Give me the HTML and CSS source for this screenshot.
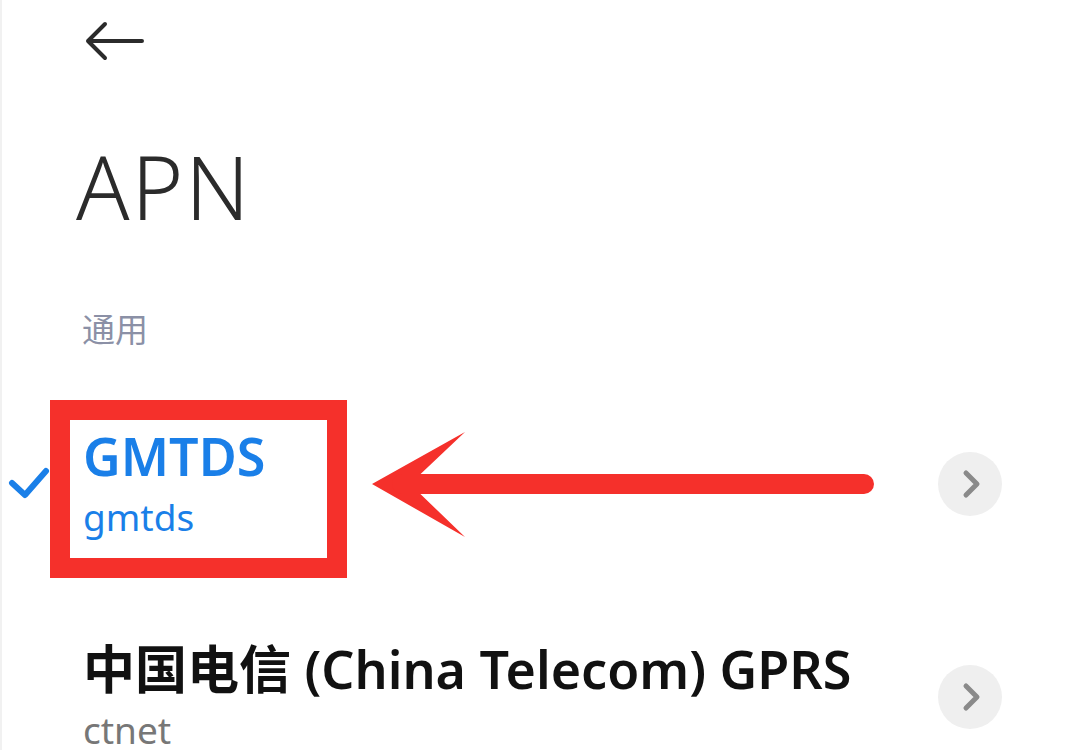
FILE: index.html
```html
<!DOCTYPE html>
<html lang="zh">
  <head>
    <meta charset="UTF-8" />
    <meta name="viewport" content="width=device-width, initial-scale=1.0" />
    <title>APN</title>
    <link rel="stylesheet" href="styles.css">
  </head>
  <body>
    <div class="page">

      <div class="top-bar">
        <svg class="back-icon" width="60" height="44" viewBox="0 0 60 44">
          <path d="M57 20 H3 M20 3 L3 20 L20 37" fill="none" stroke="#2b2b2b" stroke-width="4" stroke-linecap="round" stroke-linejoin="round"/>
        </svg>
      </div>

      <h1 class="page-title">APN</h1>

      <p class="section-label">通用</p>

      <div class="apn-list">

        <div class="apn-row apn-row-active">
          <div class="check-col">
            <svg width="42" height="34" viewBox="0 0 42 34">
              <path d="M4 16 L17 28 L38 4" fill="none" stroke="#1a7fe8" stroke-width="6" stroke-linecap="round" stroke-linejoin="round"/>
            </svg>
          </div>
          <div class="apn-text">
            <p class="apn-name">GMTDS</p>
            <p class="apn-value">gmtds</p>
          </div>
          <div class="more-but">
            <svg width="20" height="30" viewBox="0 0 20 30">
              <path d="M4 4 L15 15 L4 26" fill="none" stroke="#8a8a8a" stroke-width="5" stroke-linecap="round" stroke-linejoin="round"/>
            </svg>
          </div>

          <div class="mark-box"></div>
          <svg class="mark-arrow" width="510" height="110" viewBox="0 0 510 110">
            <path d="M0 52 L93 0 L38 52 Z M0 52 L93 105 L38 52 Z" fill="#f5302b"/>
            <line x1="30" y1="52" x2="492" y2="52" stroke="#f5302b" stroke-width="20" stroke-linecap="round"/>
          </svg>
        </div>

        <div class="apn-row apn-row-last">
          <div class="check-col"></div>
          <div class="apn-text">
            <p class="apn-name">中国电信 (China Telecom) GPRS</p>
            <p class="apn-value">ctnet</p>
          </div>
          <div class="more-but">
            <svg width="20" height="30" viewBox="0 0 20 30">
              <path d="M4 4 L15 15 L4 26" fill="none" stroke="#8a8a8a" stroke-width="5" stroke-linecap="round" stroke-linejoin="round"/>
            </svg>
          </div>
        </div>

      </div>
    </div>
  </body>
</html>
```

FILE: styles.css
```css
body{
  margin: 0;
  background-color: #ffffff;
  font-family: "Noto Sans", "Noto Sans CJK SC", sans-serif;
  overflow: hidden;
}
p{
  margin: 0;
}
.page{
  width: 1080px;
  height: 750px;
  overflow: hidden;
  border-left: 2px solid #f1f1f1;
  box-sizing: border-box;
}
.top-bar{
  height: 84px;
  padding-left: 83px;
  padding-top: 21px;
  box-sizing: border-box;
}
.back-icon{
  display: block;
}
.page-title{
  margin: 0;
  padding-left: 74px;
  padding-top: 27px;
  box-sizing: border-box;
  font-size: 88px;
  font-weight: 300;
  letter-spacing: 2px;
  color: #2b2b2b;
  line-height: 150px;
  height: 221px;
}
.section-label{
  padding-left: 80px;
  font-size: 33px;
  color: #8b90a6;
  line-height: 50px;
  height: 89px;
}
.apn-row{
  position: relative;
  display: flex;
  align-items: center;
  height: 180px;
}
.apn-row-last{
  height: 246px;
}
.check-col{
  width: 81px;
  padding-left: 6px;
  box-sizing: border-box;
  display: flex;
  align-items: center;
}
.check-col svg{
  display: block;
}
.apn-text{
  flex: 1;
}
.apn-name{
  font-size: 52px;
  font-weight: 600;
  color: #111111;
  line-height: 66px;
}
.apn-value{
  font-size: 37px;
  color: #777777;
  line-height: 56px;
}
.apn-row-active .apn-name,
.apn-row-active .apn-value{
  color: #1a7fe8;
}
.more-but{
  width: 64px;
  height: 64px;
  border-radius: 50%;
  background-color: #efefef;
  margin-right: 78px;
  display: flex;
  align-items: center;
  justify-content: center;
}
.more-but svg{
  display: block;
  margin-left: 4px;
}

/* red marks drawn over the screenshot */
.mark-box{
  position: absolute;
  left: 48px;
  top: 6px;
  width: 297px;
  height: 178px;
  border: 20px solid #f5302b;
  box-sizing: border-box;
}
.mark-arrow{
  position: absolute;
  left: 370px;
  top: 38px;
}
```
